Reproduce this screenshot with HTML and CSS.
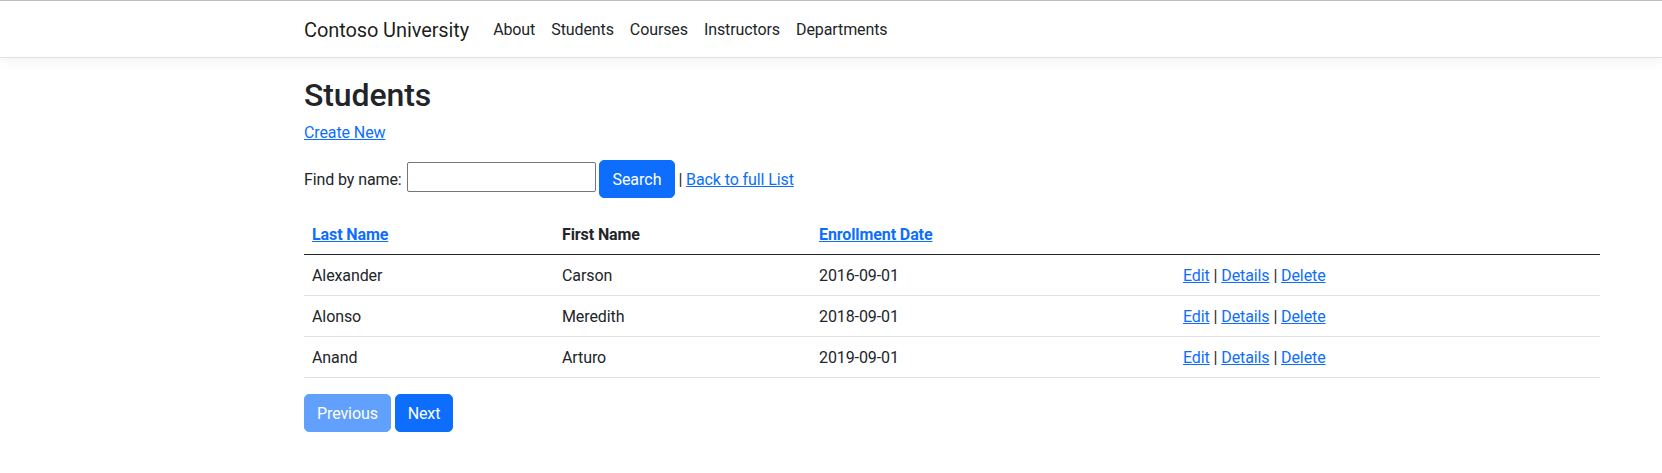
FILE: index.html
```html
<!DOCTYPE html>
<html lang="en">
<head>
<meta charset="utf-8">
<title>Students - Contoso University</title>
<link rel="stylesheet" href="styles.css">
</head>
<body>
<header>
  <nav class="navbar">
    <div class="container nav-inner">
      <a class="brand" href="#">Contoso University</a>
      <ul class="nav-list">
        <li><a class="nav-link" href="#">About</a></li>
        <li><a class="nav-link" href="#">Students</a></li>
        <li><a class="nav-link" href="#">Courses</a></li>
        <li><a class="nav-link" href="#">Instructors</a></li>
        <li><a class="nav-link" href="#">Departments</a></li>
      </ul>
    </div>
  </nav>
</header>
<main class="container">
  <h1 class="title">Students</h1>
  <p class="para para-create"><a class="link" href="#">Create New</a></p>
  <form class="search-form">
    <p class="para">Find by name: <input class="text-input" type="text" name="SearchString"> <button class="btn" type="button">Search</button> | <a class="link" href="#">Back to full List</a></p>
  </form>
  <table class="table">
    <thead>
      <tr>
        <th class="col-last"><a class="link" href="#">Last Name</a></th>
        <th class="col-first">First Name</th>
        <th class="col-date"><a class="link" href="#">Enrollment Date</a></th>
        <th class="col-actions"></th>
      </tr>
    </thead>
    <tbody>
      <tr>
        <td>Alexander</td>
        <td>Carson</td>
        <td>2016-09-01</td>
        <td><a class="link" href="#">Edit</a> | <a class="link" href="#">Details</a> | <a class="link" href="#">Delete</a></td>
      </tr>
      <tr>
        <td>Alonso</td>
        <td>Meredith</td>
        <td>2018-09-01</td>
        <td><a class="link" href="#">Edit</a> | <a class="link" href="#">Details</a> | <a class="link" href="#">Delete</a></td>
      </tr>
      <tr>
        <td>Anand</td>
        <td>Arturo</td>
        <td>2019-09-01</td>
        <td><a class="link" href="#">Edit</a> | <a class="link" href="#">Details</a> | <a class="link" href="#">Delete</a></td>
      </tr>
    </tbody>
  </table>
  <div class="pager">
    <a class="btn btn-disabled" href="#">Previous</a>
    <a class="btn" href="#">Next</a>
  </div>
</main>
</body>
</html>
```

FILE: styles.css
```css
* {
  box-sizing: border-box;
}

html, body {
  margin: 0;
  padding: 0;
  background: #fff;
}

body {
  font-family: Roboto, "Liberation Sans", Arial, sans-serif;
  font-size: 16px;
  line-height: 1.5;
  letter-spacing: -0.1px;
  color: #212529;
}

.container {
  width: 1320px;
  padding: 0 12px;
  margin-left: 292px;
}

.navbar {
  border-top: 1px solid #bdbdbd;
  border-bottom: 1px solid #dee2e6;
  box-shadow: 0 4px 12px rgba(0, 0, 0, 0.05);
  padding: 8px 0;
  margin-bottom: 16px;
  background: #fff;
}

.nav-inner {
  display: flex;
  align-items: center;
}

.brand {
  font-size: 20px;
  line-height: 30px;
  padding: 6px 0 4px;
  margin-right: 16px;
  color: rgba(0, 0, 0, 0.9);
  text-decoration: none;
}

.nav-list {
  display: flex;
  list-style: none;
  margin: 0;
  padding: 0;
}

.nav-link {
  display: block;
  padding: 9px 8px 7px;
  color: #212529;
  text-decoration: none;
}

.title {
  font-size: 32px;
  font-weight: 500;
  line-height: 1.2;
  padding-top: 2px;
  margin: 0 0 6px;
}

.para {
  margin: 0 0 16px;
}

.para-create {
  padding-top: 1px;
  margin-bottom: 15px;
}

.search-form {
  margin: 0;
}

.link {
  color: #0d6efd;
  text-decoration: underline;
}

.text-input {
  font: inherit;
  width: 189px;
  height: 30px;
  padding: 1px 2px;
  margin-left: 1px;
  border: 1px solid #767676;
  border-radius: 2px;
  color: #212529;
  background: #fff;
  vertical-align: 3px;
}

.btn {
  display: inline-block;
  font: inherit;
  font-size: 16px;
  line-height: 1.5;
  padding: 7px 12px 5px;
  color: #fff;
  background: #0d6efd;
  border: 1px solid #0d6efd;
  border-radius: 5px;
  text-decoration: none;
  cursor: pointer;
}

.btn-disabled {
  opacity: 0.65;
  pointer-events: none;
}

.table {
  width: 1296px;
  border-collapse: collapse;
  margin-bottom: 16px;
}

.table th,
.table td {
  padding: 9px 8px 7px;
  text-align: left;
  vertical-align: top;
  border-bottom: 1px solid #dee2e6;
}

.table th {
  font-weight: 700;
  border-bottom: 1px solid #212529;
}

.col-last {
  width: 250px;
}

.col-first {
  width: 257px;
}

.col-date {
  width: 364px;
}

.pager {
  display: block;
}
```
